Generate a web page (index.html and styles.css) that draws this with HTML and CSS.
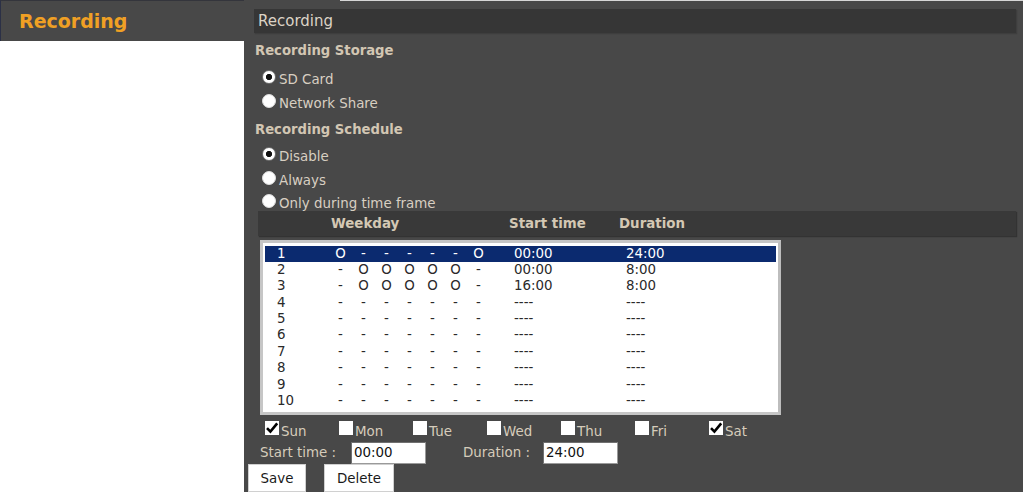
FILE: index.html
```html
<!DOCTYPE html>
<html>
<head>
<meta charset="utf-8">
<link rel="stylesheet" href="styles.css">
</head>
<body>
<div class="page">
  <aside class="side">
    <div class="side-head">Recording</div>
  </aside>
  <main class="main">
    <div class="title-bar">Recording</div>
    <div class="section-title">Recording Storage</div>
    <div class="radios">
      <label class="radio-row"><span class="radio checked"></span>SD Card</label>
      <label class="radio-row"><span class="radio"></span>Network Share</label>
    </div>
    <div class="section-title sched">Recording Schedule</div>
    <div class="radios second">
      <label class="radio-row"><span class="radio checked"></span>Disable</label>
      <label class="radio-row"><span class="radio"></span>Always</label>
      <label class="radio-row"><span class="radio"></span>Only during time frame</label>
    </div>
    <div class="table-head">
      <span class="th-week">Weekday</span>
      <span class="th-start">Start time</span>
      <span class="th-dur">Duration</span>
    </div>
    <div class="listbox">
      <div class="row selected"><span>1</span><span>O</span><span>-</span><span>-</span><span>-</span><span>-</span><span>-</span><span>O</span><span class="t">00:00</span><span class="t">24:00</span></div>
      <div class="row"><span>2</span><span>-</span><span>O</span><span>O</span><span>O</span><span>O</span><span>O</span><span>-</span><span class="t">00:00</span><span class="t">8:00</span></div>
      <div class="row"><span>3</span><span>-</span><span>O</span><span>O</span><span>O</span><span>O</span><span>O</span><span>-</span><span class="t">16:00</span><span class="t">8:00</span></div>
      <div class="row"><span>4</span><span>-</span><span>-</span><span>-</span><span>-</span><span>-</span><span>-</span><span>-</span><span class="t">----</span><span class="t">----</span></div>
      <div class="row"><span>5</span><span>-</span><span>-</span><span>-</span><span>-</span><span>-</span><span>-</span><span>-</span><span class="t">----</span><span class="t">----</span></div>
      <div class="row"><span>6</span><span>-</span><span>-</span><span>-</span><span>-</span><span>-</span><span>-</span><span>-</span><span class="t">----</span><span class="t">----</span></div>
      <div class="row"><span>7</span><span>-</span><span>-</span><span>-</span><span>-</span><span>-</span><span>-</span><span>-</span><span class="t">----</span><span class="t">----</span></div>
      <div class="row"><span>8</span><span>-</span><span>-</span><span>-</span><span>-</span><span>-</span><span>-</span><span>-</span><span class="t">----</span><span class="t">----</span></div>
      <div class="row"><span>9</span><span>-</span><span>-</span><span>-</span><span>-</span><span>-</span><span>-</span><span>-</span><span class="t">----</span><span class="t">----</span></div>
      <div class="row"><span>10</span><span>-</span><span>-</span><span>-</span><span>-</span><span>-</span><span>-</span><span>-</span><span class="t">----</span><span class="t">----</span></div>
    </div>
    <div class="days">
      <label class="day"><span class="check"><svg viewBox="0 0 14 14" width="14" height="14"><path d="M2 7.2 L5.4 10.6 L12.2 2.4" fill="none" stroke="#000" stroke-width="2.6" stroke-linejoin="miter"/></svg></span>Sun</label>
      <label class="day"><span class="check"></span>Mon</label>
      <label class="day"><span class="check"></span>Tue</label>
      <label class="day"><span class="check"></span>Wed</label>
      <label class="day"><span class="check"></span>Thu</label>
      <label class="day"><span class="check"></span>Fri</label>
      <label class="day"><span class="check"><svg viewBox="0 0 14 14" width="14" height="14"><path d="M2 7.2 L5.4 10.6 L12.2 2.4" fill="none" stroke="#000" stroke-width="2.6" stroke-linejoin="miter"/></svg></span>Sat</label>
    </div>
    <div class="times">
      <span class="lbl">Start time :</span>
      <span class="field">00:00</span>
      <span class="lbl dur">Duration :</span>
      <span class="field">24:00</span>
    </div>
    <div class="buttons">
      <button class="btn save">Save</button>
      <button class="btn del">Delete</button>
    </div>
  </main>
</div>
</body>
</html>
```
FILE: styles.css
```css
html, body {
  margin: 0;
  padding: 0;
  background: #ffffff;
  font-family: "DejaVu Sans", Verdana, sans-serif;
}
.page {
  display: flex;
  width: 1023px;
  height: 492px;
  overflow: hidden;
}
.side {
  width: 244px;
  flex: none;
  background: #ffffff;
}
.side-head {
  height: 41px;
  background: #484848;
  border-left: 1px solid #2b3046;
  border-top: 1px solid #34353c;
  box-sizing: border-box;
  color: #f0a024;
  font-weight: bold;
  font-size: 19px;
  line-height: 40px;
  padding-left: 18px;
}
.main {
  flex: 1;
  background: linear-gradient(#d6d6d6, #d6d6d6) 96px 0 / 100% 1px no-repeat, #484848;
  padding: 9px 7px 0 4px;
  box-sizing: border-box;
  color: #d6ccbb;
}
.title-bar {
  margin-left: 6px;
  height: 24px;
  background: #363636;
  box-shadow: 1px 1px 1px #3e3e3e;
  color: #dcd3c6;
  font-size: 15px;
  line-height: 24px;
  padding-left: 4px;
}
.section-title {
  font-weight: bold;
  font-size: 13.2px;
  color: #d2c6b3;
  margin: 9px 0 0 7px;
  line-height: 18px;
}
.section-title.sched {
  margin-top: 6px;
}
.radios {
  display: flex;
  flex-direction: column;
  margin: 8px 0 0 14px;
}
.radios.second {
  margin-top: 6px;
}
.radio-row {
  display: flex;
  align-items: center;
  height: 23.5px;
  font-size: 13.4px;
  color: #d8cfc2;
}
.radio {
  width: 14px;
  height: 14px;
  border-radius: 50%;
  background: #ffffff;
  margin-right: 3px;
  margin-top: -5px;
  box-sizing: border-box;
  border: 1px solid #dcdcdc;
}
.radio.checked {
  border: 1.5px solid #6f6f6f;
  background: radial-gradient(circle, #111 0 2.8px, #ffffff 3.4px);
}
.table-head {
  margin: -5px 0 0 10px;
  height: 25px;
  background: #393939;
  box-shadow: 1px 1px 1px #333;
  display: flex;
  align-items: center;
  font-weight: bold;
  font-size: 13.4px;
  color: #d4c8b4;
}
.th-week { margin-left: 73px; width: 178px; }
.th-start { width: 110px; }
.listbox {
  margin: 4px 0 0 12px;
  width: 521px;
  box-sizing: border-box;
  background: #ffffff;
  border: 3px solid #c6c6c6;
  border-right-color: #bdbdbd;
  padding: 3px 2px;
}
.row {
  display: grid;
  grid-template-columns: 64px repeat(7, 23px) 112px 1fr;
  height: 16.4px;
  line-height: 16.4px;
  font-size: 13.4px;
  color: #2a2a2a;
}
.row span:first-child { padding-left: 12px; }
.row span { text-align: center; white-space: nowrap; }
.row span:first-child, .row span.t { text-align: left; }
.row span.t { padding-left: 24px; }
.row.selected {
  background: #0b2a6f;
  color: #ffffff;
}
.days {
  display: flex;
  margin: 6px 0 0 17px;
  height: 20px;
  align-items: center;
}
.day {
  display: flex;
  align-items: center;
  width: 74px;
  font-size: 13.4px;
  color: #d6ccbb;
}
.check {
  width: 14px;
  height: 14px;
  background: #ffffff;
  margin-right: 2px;
  margin-top: -6px;
  display: block;
}
.check svg { display: block; }
.times {
  display: flex;
  align-items: center;
  margin: 0 0 0 12px;
  height: 23px;
  font-size: 13.4px;
  color: #d6ccbb;
}
.lbl { width: 91px; }
.lbl.dur { width: 80px; margin-left: 37px; }
.field {
  width: 75px;
  height: 22px;
  box-sizing: border-box;
  background: #ffffff;
  border: 1px solid #9a9a9a;
  border-top-color: #707070;
  border-left-color: #707070;
  color: #111;
  line-height: 20px;
  padding-left: 2px;
}
.buttons {
  display: flex;
  gap: 18px;
  margin-top: 0;
}
.btn {
  font-family: "DejaVu Sans", Verdana, sans-serif;
  font-size: 13.4px;
  background: #ffffff;
  color: #1a1a1a;
  border: 1px solid #d0d0d0;
  height: 28px;
  padding: 0;
  border-radius: 0;
}
.btn.save { width: 58px; }
.btn.del { width: 70px; }
```
